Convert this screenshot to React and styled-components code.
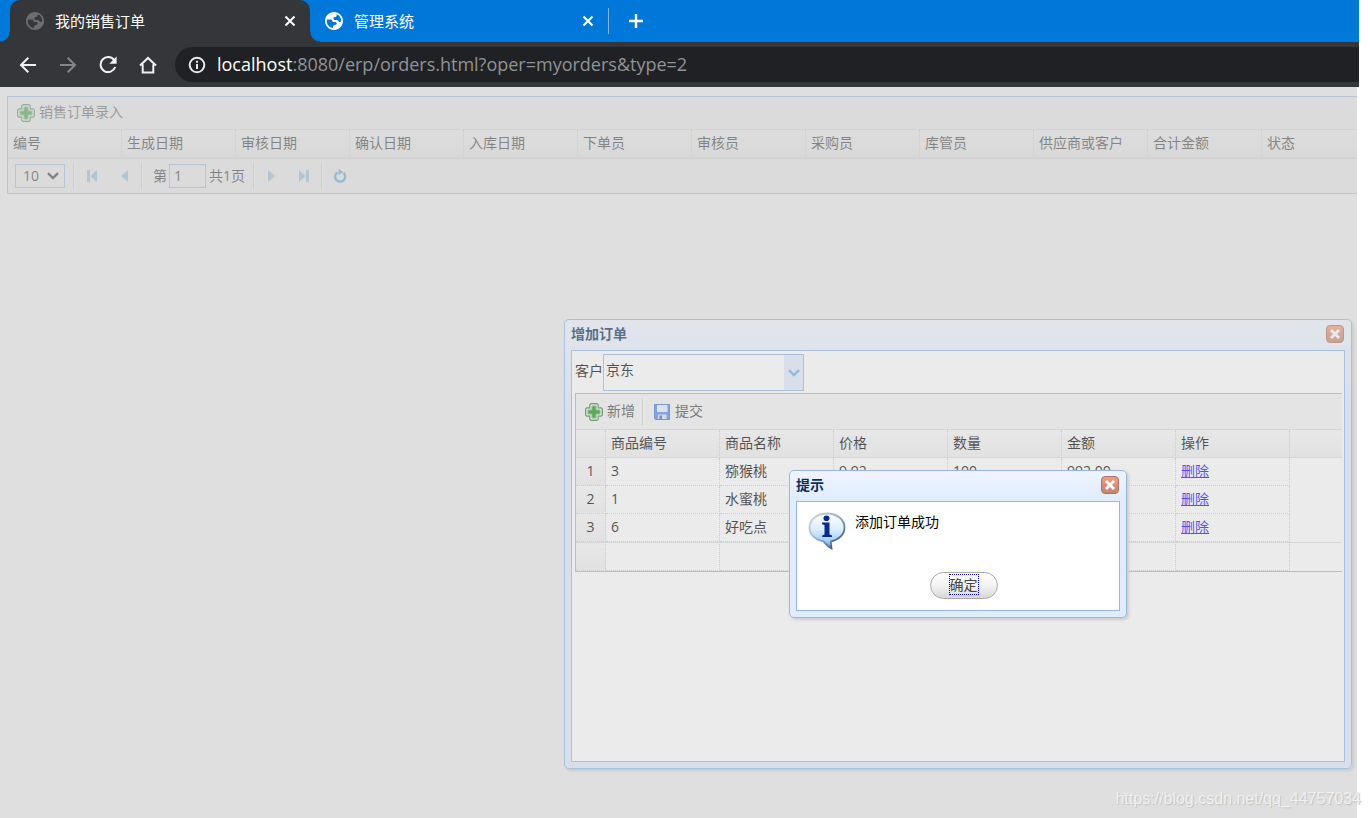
import React from "react"
import styled, { createGlobalStyle } from "styled-components"

const orderColumns = [
  "编号",
  "生成日期",
  "审核日期",
  "确认日期",
  "入库日期",
  "下单员",
  "审核员",
  "采购员",
  "库管员",
  "供应商或客户",
  "合计金额",
  "状态",
]

const goodsColumns = ["商品编号", "商品名称", "价格", "数量", "金额", "操作"]

const goods = [
  { id: 3, name: "猕猴桃", price: "9.92", num: "100", money: "992.00" },
  { id: 1, name: "水蜜桃", price: "", num: "", money: "" },
  { id: 6, name: "好吃点", price: "", num: "", money: "" },
]

const GlobalStyle = createGlobalStyle`
  * {
    box-sizing: border-box;
  }
  body {
    margin: 0;
    background: #fff;
    color: #000;
    font-family: "Open Sans", "Noto Sans CJK SC", sans-serif;
    font-size: 14px;
    line-height: 20px;
  }
  button, input, select {
    margin: 0;
    padding: 0;
    border: 0;
    background: none;
    color: inherit;
    font: inherit;
  }
  svg {
    display: block;
    flex: none;
  }
`

/* ---------- icons ---------- */

const GlobeIcon = () => (
  <svg width="18" height="18" viewBox="2 2 20 20">
    <path
      fill="currentColor"
      d="M12 2C6.480 2 2 6.480 2 12s4.480 10 10 10 10-4.480 10-10S17.520 2 12 2zm-1 17.930c-3.950-.490-7-3.850-7-7.930 0-.620.080-1.210.210-1.790H9c1 0 1 2.790 2 2.790h2.500c1 0 1.500 1 1.500 2 0 .800-1 1.200-2 1.500-1.100.300-2 1-2 1.500v1.930zm9-7.930c-.500 1.200-1.600 1.400-2.500.700-.800-.800-1-1.700-2.500-1.700h-2c-1 0-1.500-1-1.500-2s.700-1.500 1.500-1.500c1 0 2-.900 2-2v-.910c2.930 1.190 5 4.060 5 7.410z"
    />
  </svg>
)

const CrossIcon = ({ size = 12 }) => (
  <svg width={size} height={size} viewBox="0 0 12 12">
    <path d="M1.500 1.500l9 9M10.500 1.500l-9 9" stroke="currentColor" strokeWidth="2" />
  </svg>
)

const CloseIcon = () => (
  <svg width="12" height="12" viewBox="0 0 12 12">
    <path d="M2 2l8 8M10 2l-8 8" stroke="currentColor" strokeWidth="2.800" />
  </svg>
)

const PlusIcon = () => (
  <svg width="16" height="16" viewBox="0 0 16 16">
    <path d="M8 1v14M1 8h14" stroke="currentColor" strokeWidth="2.400" />
  </svg>
)

const BackIcon = () => (
  <svg width="18" height="18" viewBox="0 0 18 18">
    <path
      d="M17 9H2.500M9.300 1.700L2 9l7.300 7.300"
      fill="none"
      stroke="currentColor"
      strokeWidth="2"
    />
  </svg>
)

const ForwardIcon = () => (
  <svg width="18" height="18" viewBox="0 0 18 18">
    <path
      d="M1 9h14.500M8.700 1.700L16 9l-7.300 7.300"
      fill="none"
      stroke="currentColor"
      strokeWidth="2"
    />
  </svg>
)

const ReloadIcon = () => (
  <svg width="18" height="18" viewBox="0 0 18 18">
    <path
      d="M15.200 4.200A7.500 7.500 0 1 0 16.200 11"
      fill="none"
      stroke="currentColor"
      strokeWidth="2"
    />
    <path d="M17.600 0.500v7.300h-7.300z" fill="currentColor" />
  </svg>
)

const HomeIcon = () => (
  <svg width="18" height="18" viewBox="0 0 18 18">
    <path
      d="M1 9.500L9 1.900l8 7.600M3.700 8.200v8.300h10.600V8.200"
      fill="none"
      stroke="currentColor"
      strokeWidth="2"
    />
  </svg>
)

const SiteInfoIcon = () => (
  <svg width="18" height="18" viewBox="0 0 18 18">
    <circle cx="9" cy="9" r="7.300" fill="none" stroke="currentColor" strokeWidth="2" />
    <path d="M9 8v5M9 4.800v2" stroke="currentColor" strokeWidth="2" />
  </svg>
)

const AddIcon = () => (
  <svg width="18" height="18" viewBox="0 0 18 18">
    <path
      d="M6 .6h6L13.200 1.800V4.800H16.200L17.400 6v6L16.200 13.200H13.200V16.200L12 17.400H6L4.800 16.200V13.200H1.800L.6 12V6L1.800 4.800H4.800V1.800z"
      fill="#e4f2e4"
      stroke="#3f7a48"
      strokeWidth="1.200"
    />
    <path d="M7 3h4v4h4v4h-4v4H7v-4H3V7h4z" fill="#0c930c" stroke="#6fb56f" />
  </svg>
)

const SaveIcon = () => (
  <svg width="18" height="18" viewBox="0 0 18 18">
    <path d="M1.500 1.500h15v15h-14l-1-1z" fill="#5488e4" stroke="#4572cc" />
    <path d="M4 2h10.500v7H4z" fill="#e4edfc" />
    <path d="M5 11.500h8.500V16H5z" fill="#dbe4f4" />
    <path d="M6.500 12.500H9V16H6.500z" fill="#4169b7" />
  </svg>
)

const ChevronIcon = () => (
  <svg width="12" height="8" viewBox="0 0 12 8">
    <path d="M1 1.200l5 4.800 5-4.800" fill="none" stroke="currentColor" strokeWidth="2.400" />
  </svg>
)

const FirstIcon = () => (
  <svg width="12" height="12" viewBox="0 0 12 12">
    <path d="M1 0h3v12H1zM11 0v12L4.500 6z" fill="currentColor" />
  </svg>
)

const PrevIcon = () => (
  <svg width="12" height="12" viewBox="0 0 12 12">
    <path d="M10 0v12L3 6z" fill="currentColor" />
  </svg>
)

const NextIcon = () => (
  <svg width="12" height="12" viewBox="0 0 12 12">
    <path d="M2 0v12l7-6z" fill="currentColor" />
  </svg>
)

const LastIcon = () => (
  <svg width="12" height="12" viewBox="0 0 12 12">
    <path d="M1 0v12l6.500-6zM8 0h3v12H8z" fill="currentColor" />
  </svg>
)

const RefreshIcon = () => (
  <svg width="14" height="14" viewBox="0 0 14 14">
    <path
      d="M4.500 3.500A5 5 0 1 0 10.500 4"
      fill="none"
      stroke="currentColor"
      strokeWidth="2.400"
    />
    <path d="M5.500 0l5 3-5 3z" fill="currentColor" />
  </svg>
)

const InfoBubble = () => (
  <svg width="38" height="38" viewBox="0 0 38 38">
    <defs>
      <linearGradient id="bubble" x1="0" y1="0" x2="0" y2="1">
        <stop offset="0" stopColor="#ffffff" />
        <stop offset="0.450" stopColor="#dceeff" />
        <stop offset="0.780" stopColor="#a5d0f8" />
        <stop offset="1" stopColor="#5c87c0" />
      </linearGradient>
      <linearGradient id="rim" x1="0" y1="0" x2="1" y2="1">
        <stop offset="0" stopColor="#d3dbe6" />
        <stop offset="0.500" stopColor="#8fa9cc" />
        <stop offset="1" stopColor="#1c3768" />
      </linearGradient>
    </defs>
    <path
      d="M19 1.500C9 1.500 1.500 7.500 1.500 15.500c0 7 5.500 12 13.500 13.700 2 .8 3.500 5.500 8.500 7.300-.5-3-.8-5-.5-7.200 8-1.600 13.500-7 13.500-13.800C36.500 7.500 29 1.500 19 1.500z"
      fill="url(#bubble)"
      stroke="url(#rim)"
      strokeWidth="1.800"
    />
    <ellipse cx="18.500" cy="6.300" rx="3" ry="2.800" fill="#0a2a8c" />
    <path d="M14 10.500h7.500v12l2.500 1V25h-9.800v-1.500l2.300-1V13L14 12.300z" fill="#0a2a8c" />
  </svg>
)

/* ---------- browser frame ---------- */

const Screen = styled.div`
  position: relative;
  display: flex;
  flex-direction: column;
  min-height: 100vh;
  margin-right: 11px;
`

const TabStrip = styled.div`
  display: flex;
  align-items: stretch;
  height: 42px;
  padding-left: 10px;
  background: #0078d9;
`

const Tab = styled.div`
  position: relative;
  display: flex;
  align-items: center;
  gap: 11px;
  width: ${p => (p.$active ? "300px" : "298px")};
  padding: 0 14px 0 ${p => (p.$active ? "16px" : "15px")};
  border-radius: 10px 10px 0 0;
  background: ${p => (p.$active ? "#35363a" : "transparent")};
  color: #fff;
  font-size: 15px;
  ${p =>
    p.$active &&
    `
    &::before, &::after {
      content: "";
      position: absolute;
      bottom: 0;
      width: 10px;
      height: 10px;
    }
    &::before {
      right: 100%;
      background: radial-gradient(circle at 0 0, transparent 9px, #35363a 10px);
    }
    &::after {
      left: 100%;
      background: radial-gradient(circle at 100% 0, transparent 9px, #35363a 10px);
    }
  `}
`

const Favicon = styled.span`
  color: ${p => (p.$dim ? "#6b6d70" : "#fff")};
`

const TabTitle = styled.span`
  flex: 1;
  padding-bottom: 1px;
  white-space: nowrap;
`

const TabButton = styled.button`
  display: flex;
  color: #fff;
`

const NewTab = styled.button`
  display: flex;
  align-items: center;
  align-self: center;
  height: 26px;
  padding-left: 19px;
  border-left: 1px solid #7ab8ec;
  color: #fff;
`

const NavBar = styled.div`
  display: flex;
  align-items: center;
  height: 45px;
  padding-left: 8px;
  background: #35363a;
`

const NavButton = styled.button`
  display: flex;
  justify-content: center;
  width: 40px;
  color: ${p => (p.$dim ? "#85868a" : "#f1f1f1")};
`

const AddressBar = styled.div`
  display: flex;
  flex: 1;
  align-items: center;
  gap: 11px;
  height: 35px;
  margin-left: 7px;
  padding-left: 13px;
  border-radius: 18px 0 0 18px;
  background: #202124;
  color: #e8e8e8;
`

const Url = styled.span`
  padding-bottom: 2px;
  color: #909396;
  font-size: 18px;
  white-space: nowrap;
`

const Host = styled.span`
  color: #fff;
`

/* ---------- page ---------- */

const Page = styled.main`
  position: relative;
  flex: 1;
  margin-right: 2px;
  padding: 9px 0 0 7px;
  overflow: hidden;
`

const Mask = styled.div`
  position: absolute;
  inset: 0;
  background: #ccc;
  opacity: 0.4;
`

const GridPanel = styled.section`
  border: 1px solid #95b8e7;
  border-right: 0;
  overflow: hidden;
`

const Toolbar = styled.div`
  display: flex;
  align-items: center;
  height: ${p => p.$height};
  padding-left: 9px;
  border-bottom: 1px solid #ddd;
  background: #f4f4f4;
`

const ToolButton = styled.button`
  display: flex;
  align-items: center;
  gap: 4px;
  color: #444;
  white-space: nowrap;
`

const ToolText = styled.span`
  padding-bottom: 2px;
`

const Separator = styled.span`
  width: 2px;
  height: 26px;
  margin: ${p => p.$margin || "0 1px"};
  border-left: 1px solid #ccc;
  border-right: 1px solid #fff;
`

const DataTable = styled.table`
  width: ${p => (p.$wide ? "1368px" : "100%")};
  border-collapse: separate;
  border-spacing: 0;
  table-layout: fixed;
`

const Col = styled.col`
  width: ${p => p.$width};
`

const HeadCell = styled.th`
  height: 28px;
  padding: 0 5px 2px;
  border-right: ${p => (p.$last ? "0" : "1px dotted #ccc")};
  border-bottom: 1px solid #ddd;
  color: #000;
  font-weight: 400;
  text-align: left;
  white-space: nowrap;
`

const HeadRow = styled.tr`
  background: linear-gradient(to bottom, #f9f9f9, #efefef);
`

const Cell = styled.td`
  height: 28px;
  padding: 0 5px 2px;
  border-right: 1px dotted #ccc;
  border-bottom: 1px dotted #ccc;
  color: #000;
  white-space: nowrap;
`

const NumberCell = styled(Cell)`
  padding: 0 0 2px;
  background: linear-gradient(to bottom, #f9f9f9, #efefef);
  text-align: center;
`

const BlankCell = styled.td`
  padding: 0;
`

const FootRow = styled.tr`
  & > td {
    height: 29px;
    border-top: 1px solid #ddd;
  }
`

const DeleteLink = styled.a`
  color: #00f;
`

const Pager = styled.div`
  display: flex;
  align-items: center;
  height: 35px;
  padding: 0 0 1px 7px;
  border-top: 1px solid #ddd;
  background: #f4f4f4;
  color: #000;
`

const PagerButton = styled.button`
  display: flex;
  justify-content: center;
  width: 32px;
  color: ${p => (p.$strong ? "#3f98d0" : "#7dbce0")};
`

const PageSize = styled.span`
  display: grid;
  grid-template-columns: 50px;
  align-items: center;
  margin-right: 7px;

  & > * {
    grid-area: 1 / 1;
  }
  svg {
    justify-self: end;
    margin-right: 6px;
    pointer-events: none;
  }
`

const PageSizeSelect = styled.select`
  height: 24px;
  padding-left: 7px;
  border: 1px solid #95b8e7;
  appearance: none;
`

const PageLabel = styled.label`
  display: flex;
  align-items: center;
  gap: 2px;
  margin-left: 9px;
`

const PageInput = styled.input`
  width: 37px;
  height: 24px;
  padding-left: 4px;
  border: 1px solid #95b8e7;
`

const PageTotal = styled.span`
  margin: 0 7px 0 3px;
`

/* ---------- windows ---------- */

const WindowPlace = styled.div`
  position: absolute;
  top: 232px;
  left: 564px;
  right: 5px;
  height: 450px;
`

const DialogPlace = styled(WindowPlace)`
  display: grid;
  place-items: center;
`

const Window = styled.section`
  display: flex;
  flex-direction: column;
  width: ${p => p.$width || "100%"};
  height: ${p => p.$height || "auto"};
  padding: 0 6px 6px;
  border: 1px solid #95b8e7;
  border-radius: 5px;
  background: linear-gradient(to bottom, #eff5ff, #e0ecff 20%);
  box-shadow: 2px 2px 3px #ccc;
`

const WindowHeader = styled.header`
  display: flex;
  align-items: center;
  justify-content: space-between;
  height: 30px;
  padding: 0 1px 2px 0;
`

const WindowTitle = styled.h2`
  margin: 0;
  color: #0e2d5f;
  font-size: 14px;
  font-weight: 700;
  line-height: 20px;
`

const CloseButton = styled.button`
  display: flex;
  align-items: center;
  justify-content: center;
  width: 18px;
  height: 18px;
  border: 1px solid #b56f60;
  border-radius: 4px;
  background: linear-gradient(to bottom, #f0a080, #d58a78 60%, #c08a6c);
  color: #fff;
`

const WindowBody = styled.div`
  flex: 1;
  padding: ${p => p.$padding};
  border: 1px solid #95b8e7;
  background: #fff;
`

const CustomerRow = styled.label`
  display: flex;
  align-items: center;
`

const CustomerText = styled.span`
  padding-bottom: 3px;
`

const Combo = styled.span`
  display: grid;
  grid-template-columns: 180px 19px;
  height: 37px;
  border: 1px solid #95b8e7;
`

const ComboSelect = styled.select`
  grid-area: 1 / 1 / 2 / 3;
  padding: 0 20px 6px 2px;
  appearance: none;
`

const ComboArrow = styled.span`
  grid-area: 1 / 2;
  display: flex;
  align-items: center;
  justify-content: center;
  background: #e0ecff;
  color: #62b0e4;
  pointer-events: none;
`

const GoodsPanel = styled.div`
  margin-top: 2px;
  border: 1px solid #95b8e7;
  border-right: 0;
`

const Message = styled.div`
  display: flex;
  gap: 9px;
  height: 60px;
`

const MessageText = styled.p`
  margin: 0;
`

const Actions = styled.div`
  display: flex;
  justify-content: center;
`

const OkButton = styled.button`
  width: 68px;
  height: 27px;
  padding-bottom: 2px;
  border: 1px solid #aaa;
  border-radius: 14px;
  background: linear-gradient(to bottom, #fff, #f2f2f2 50%, #d8d8d8);
  color: #444;
`

const OkText = styled.span`
  display: inline-block;
  border: 1px dotted #00c;
  line-height: 19px;
`

const Watermark = styled.span`
  position: absolute;
  right: -2px;
  bottom: 10px;
  color: #f0f0f0;
  font-family: "Liberation Sans", sans-serif;
  font-size: 16px;
  line-height: 18px;
  text-shadow: 1px 1px 1px #c0c0c0;
  white-space: nowrap;
`

const Browser = () => (
  <header>
    <TabStrip>
      <Tab $active>
        <Favicon $dim>
          <GlobeIcon />
        </Favicon>
        <TabTitle>我的销售订单</TabTitle>
        <TabButton aria-label="关闭标签页">
          <CrossIcon />
        </TabButton>
      </Tab>
      <Tab>
        <Favicon>
          <GlobeIcon />
        </Favicon>
        <TabTitle>管理系统</TabTitle>
        <TabButton aria-label="关闭标签页">
          <CrossIcon />
        </TabButton>
      </Tab>
      <NewTab aria-label="新标签页">
        <PlusIcon />
      </NewTab>
    </TabStrip>
    <NavBar>
      <NavButton aria-label="后退">
        <BackIcon />
      </NavButton>
      <NavButton $dim aria-label="前进">
        <ForwardIcon />
      </NavButton>
      <NavButton aria-label="刷新">
        <ReloadIcon />
      </NavButton>
      <NavButton aria-label="主页">
        <HomeIcon />
      </NavButton>
      <AddressBar>
        <SiteInfoIcon />
        <Url>
          <Host>localhost</Host>:8080/erp/orders.html?oper=myorders&amp;type=2
        </Url>
      </AddressBar>
    </NavBar>
  </header>
)

const OrderGrid = () => (
  <GridPanel>
    <Toolbar $height="33px">
      <ToolButton>
        <AddIcon />
        <ToolText>销售订单录入</ToolText>
      </ToolButton>
    </Toolbar>
    <DataTable $wide>
      <thead>
        <HeadRow>
          {orderColumns.map(title => (
            <HeadCell key={title}>{title}</HeadCell>
          ))}
        </HeadRow>
      </thead>
    </DataTable>
    <Pager>
      <PageSize>
        <PageSizeSelect aria-label="每页条数" defaultValue="10">
          <option>10</option>
          <option>20</option>
          <option>30</option>
        </PageSizeSelect>
        <ChevronIcon />
      </PageSize>
      <Separator />
      <PagerButton aria-label="第一页">
        <FirstIcon />
      </PagerButton>
      <PagerButton aria-label="上一页">
        <PrevIcon />
      </PagerButton>
      <Separator />
      <PageLabel>
        第
        <PageInput type="text" defaultValue="1" />
      </PageLabel>
      <PageTotal>共1页</PageTotal>
      <Separator />
      <PagerButton aria-label="下一页">
        <NextIcon />
      </PagerButton>
      <PagerButton aria-label="最后一页">
        <LastIcon />
      </PagerButton>
      <Separator />
      <PagerButton $strong aria-label="刷新">
        <RefreshIcon />
      </PagerButton>
    </Pager>
  </GridPanel>
)

const GoodsGrid = () => (
  <GoodsPanel>
    <Toolbar $height="36px">
      <ToolButton>
        <AddIcon />
        <ToolText>新增</ToolText>
      </ToolButton>
      <Separator $margin="0 9px 0 7px" />
      <ToolButton>
        <SaveIcon />
        <ToolText>提交</ToolText>
      </ToolButton>
    </Toolbar>
    <DataTable>
      <colgroup>
        <Col $width="30px" />
        {goodsColumns.map(title => (
          <Col key={title} $width="114px" />
        ))}
        <Col />
      </colgroup>
      <thead>
        <HeadRow>
          <HeadCell />
          {goodsColumns.map(title => (
            <HeadCell key={title}>{title}</HeadCell>
          ))}
          <HeadCell $last />
        </HeadRow>
      </thead>
      <tbody>
        {goods.map((row, i) => (
          <tr key={row.id}>
            <NumberCell>{i + 1}</NumberCell>
            <Cell>{row.id}</Cell>
            <Cell>{row.name}</Cell>
            <Cell>{row.price}</Cell>
            <Cell>{row.num}</Cell>
            <Cell>{row.money}</Cell>
            <Cell>
              <DeleteLink href="#">删除</DeleteLink>
            </Cell>
            <BlankCell />
          </tr>
        ))}
      </tbody>
      <tfoot>
        <FootRow>
          <NumberCell />
          {goodsColumns.map(title => (
            <Cell key={title} />
          ))}
          <BlankCell />
        </FootRow>
      </tfoot>
    </DataTable>
  </GoodsPanel>
)

const AddOrderWindow = () => (
  <WindowPlace>
    <Window $height="100%">
      <WindowHeader>
        <WindowTitle>增加订单</WindowTitle>
        <CloseButton aria-label="关闭">
          <CloseIcon />
        </CloseButton>
      </WindowHeader>
      <WindowBody $padding="3px 2px 3px 3px">
        <CustomerRow>
          <CustomerText>客户</CustomerText>
          <Combo>
            <ComboSelect defaultValue="京东">
              <option>京东</option>
            </ComboSelect>
            <ComboArrow>
              <ChevronIcon />
            </ComboArrow>
          </Combo>
        </CustomerRow>
        <GoodsGrid />
      </WindowBody>
    </Window>
  </WindowPlace>
)

const MessageDialog = () => (
  <DialogPlace>
    <Window as="div" role="dialog" aria-label="提示" $width="338px" $height="148px">
      <WindowHeader>
        <WindowTitle>提示</WindowTitle>
        <CloseButton aria-label="关闭">
          <CloseIcon />
        </CloseButton>
      </WindowHeader>
      <WindowBody $padding="10px 0 10px 11px">
        <Message>
          <InfoBubble />
          <MessageText>添加订单成功</MessageText>
        </Message>
        <Actions>
          <OkButton>
            <OkText>确定</OkText>
          </OkButton>
        </Actions>
      </WindowBody>
    </Window>
  </DialogPlace>
)

const App = () => (
  <Screen>
    <GlobalStyle />
    <Browser />
    <Page>
      <OrderGrid />
      <Mask />
      <AddOrderWindow />
      <Mask />
      <MessageDialog />
    </Page>
    <Watermark>https://blog.csdn.net/qq_44757034</Watermark>
  </Screen>
)

export default App
